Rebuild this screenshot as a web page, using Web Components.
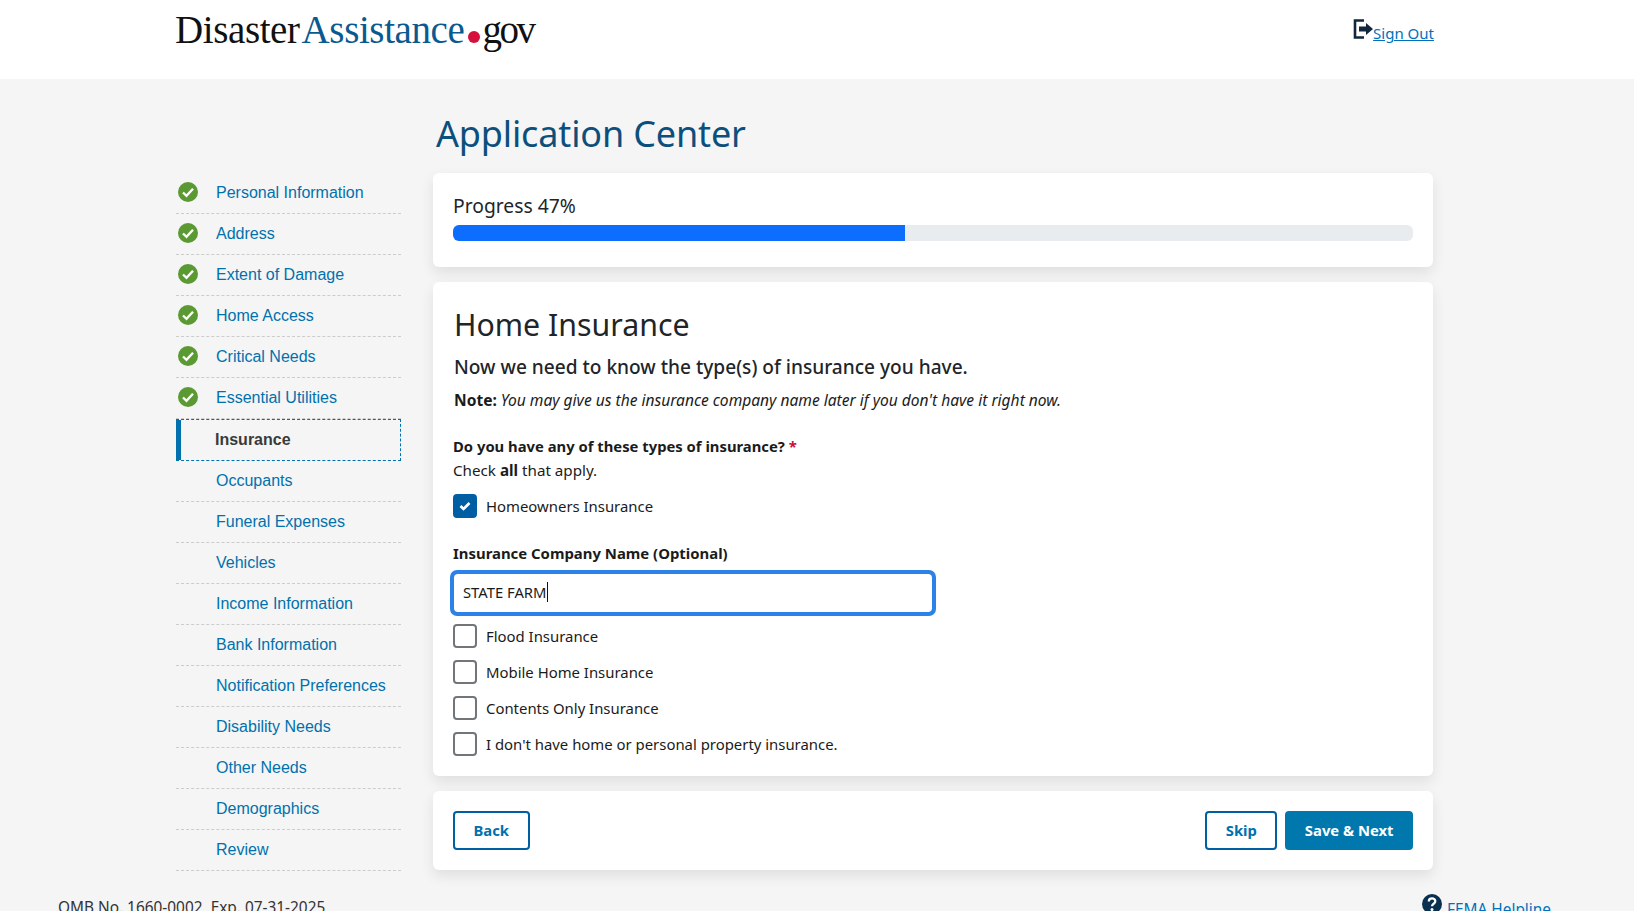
<!DOCTYPE html>
<html lang="en">
<head>
<meta charset="utf-8">
<title>Application Center</title>
<style>
    html, body {
        margin: 0;
        height: 100%;
        overflow: hidden;
        background: #f5f5f5;
    }
</style>
</head>
<body>
<app-header></app-header>
<application-page></application-page>
<script>
const SANS = `"Noto Sans", "Open Sans", sans-serif`;

class AppHeader extends HTMLElement {
    constructor() {
        super();
        this.attachShadow({ mode: 'open' });
    }

    connectedCallback() {
        this.shadowRoot.innerHTML = /*html*/ `
            <style>
                :host {
                    display: flex;
                    justify-content: space-between;
                    height: 79px;
                    padding: 0 200px 0 175px;
                    background: #fff;
                    box-sizing: border-box;
                }

                .logo {
                    display: flex;
                    align-items: baseline;
                    height: 42px;
                    margin-top: 9px;
                    font: 39px/42px "Liberation Serif", serif;
                    letter-spacing: -.4px;
                    color: #111;
                }

                .logo .blue {
                    color: #0b5a8f;
                    margin-left: 2px;
                }

                .logo .dot {
                    align-self: flex-end;
                    width: 12px;
                    height: 12px;
                    margin: 0 2px 8px 4px;
                    border-radius: 50%;
                    background: #d5103a;
                }

                .logo .gov {
                    letter-spacing: -2.500px;
                }

                .sign-out {
                    display: flex;
                    align-items: flex-start;
                    margin-top: 18px;
                    font: 15px/28px ${SANS};
                }

                .sign-out svg {
                    display: block;
                    margin-top: 1px;
                }

                .sign-out a {
                    color: #0071bc;
                    margin-top: 1px;
                }
            </style>
            <div class="logo"><span>Disaster</span><span class="blue">Assistance</span><span class="dot"></span><span class="gov">gov</span></div>
            <div class="sign-out">
                <svg width="20" height="20" viewBox="0 0 20 20">
                    <path d="M11 1.500H2v17h9" fill="none" stroke="#10273d" stroke-width="2.600"/>
                    <path d="M6 7.500h7V4l7 6-7 6v-3.500H6z" fill="#10273d"/>
                </svg>
                <a href="#">Sign Out</a>
            </div>
        `;
    }
}

class NavItem extends HTMLElement {
    constructor() {
        super();
        this.attachShadow({ mode: 'open' });
    }

    connectedCallback() {
        const done = this.hasAttribute('done');
        this.shadowRoot.innerHTML = /*html*/ `
            <style>
                :host {
                    display: flex;
                    align-items: center;
                    height: 41px;
                    box-sizing: border-box;
                    padding-left: 40px;
                    position: relative;
                    border-bottom: 1px dashed #ccc;
                    font: 16px "Liberation Sans", Arial, sans-serif;
                    color: #0071ad;
                }

                :host([current]) {
                    height: 42px;
                    padding-left: 34px;
                    border: 1px dashed #0071ad;
                    border-left: 5px solid #0071ad;
                    font-weight: 700;
                    color: #3a3a3a;
                }

                svg {
                    position: absolute;
                    left: 2px;
                    top: 9px;
                }
            </style>
            ${done ? `<svg width="20" height="20" viewBox="0 0 20 20">
                <circle cx="10" cy="10" r="10" fill="#5b9a32"/>
                <path d="M5 10.500l3.500 3.300L15 6.800" fill="none" stroke="#fff" stroke-width="2.400"/>
            </svg>` : ''}
            <slot></slot>
        `;
    }
}

class AppSidebar extends HTMLElement {
    constructor() {
        super();
        this.attachShadow({ mode: 'open' });
    }

    connectedCallback() {
        const done = ['Personal Information', 'Address', 'Extent of Damage', 'Home Access', 'Critical Needs', 'Essential Utilities'];
        const todo = ['Occupants', 'Funeral Expenses', 'Vehicles', 'Income Information', 'Bank Information',
            'Notification Preferences', 'Disability Needs', 'Other Needs', 'Demographics', 'Review'];
        this.shadowRoot.innerHTML = /*html*/ `
            <style>
                :host {
                    display: block;
                    width: 225px;
                    padding-top: 94px;
                }
            </style>
            ${done.map(t => `<nav-item done>${t}</nav-item>`).join('')}
            <nav-item current>Insurance</nav-item>
            ${todo.map(t => `<nav-item>${t}</nav-item>`).join('')}
        `;
    }
}

class AppCard extends HTMLElement {
    constructor() {
        super();
        this.attachShadow({ mode: 'open' });
    }

    connectedCallback() {
        this.shadowRoot.innerHTML = /*html*/ `
            <style>
                :host {
                    display: block;
                    padding: 20px;
                    margin-bottom: 15px;
                    background: #fff;
                    border-radius: 6px;
                    box-shadow: 0 6px 14px rgba(0, 0, 0, .09);
                    box-sizing: border-box;
                }
            </style>
            <slot></slot>
        `;
    }
}

class ProgressBar extends HTMLElement {
    constructor() {
        super();
        this.attachShadow({ mode: 'open' });
    }

    connectedCallback() {
        const value = this.getAttribute('value');
        this.shadowRoot.innerHTML = /*html*/ `
            <style>
                :host {
                    display: block;
                    height: 54px;
                    color: #212529;
                }

                .label {
                    font: 19.300px/26px ${SANS};
                    height: 32px;
                }

                .track {
                    height: 16px;
                    border-radius: 6px;
                    background: #e9ecef;
                    overflow: hidden;
                }

                .fill {
                    height: 100%;
                    width: calc(${value}% + 1px);
                    background: #0d6efd;
                }
            </style>
            <div class="label">Progress ${value}%</div>
            <div class="track"><div class="fill"></div></div>
        `;
    }
}

class CheckOption extends HTMLElement {
    constructor() {
        super();
        this.attachShadow({ mode: 'open' });
    }

    connectedCallback() {
        const checked = this.hasAttribute('checked');
        this.shadowRoot.innerHTML = /*html*/ `
            <style>
                :host {
                    display: flex;
                    align-items: center;
                    gap: 9px;
                    height: 24px;
                    margin-bottom: 12px;
                    font: 14.900px/24px ${SANS};
                    color: #1b1b1b;
                }

                .box {
                    width: 24px;
                    height: 24px;
                    box-sizing: border-box;
                    border: 2px solid #71767a;
                    border-radius: 4px;
                    background: #fff;
                }

                .box.on {
                    border-color: #005ea2;
                    background: #005ea2;
                }

                svg {
                    display: block;
                }
            </style>
            <div class="box ${checked ? 'on' : ''}">
                ${checked ? `<svg width="20" height="20" viewBox="0 0 20 20">
                    <path d="M5.500 10l3 3 6-6" fill="none" stroke="#fff" stroke-width="2.600"/>
                </svg>` : ''}
            </div>
            <slot></slot>
        `;
    }
}

class TextField extends HTMLElement {
    constructor() {
        super();
        this.attachShadow({ mode: 'open' });
    }

    connectedCallback() {
        this.shadowRoot.innerHTML = /*html*/ `
            <style>
                :host {
                    display: block;
                }

                label {
                    display: block;
                    font: 700 14.900px/22px ${SANS};
                    color: #1b1b1b;
                    margin-bottom: 9px;
                }

                .input {
                    display: flex;
                    align-items: center;
                    width: 480px;
                    height: 40px;
                    padding: 0 9px 2px;
                    box-sizing: border-box;
                    border: 1px solid #5c6269;
                    border-radius: 4px;
                    outline: 4px solid #2b82e8;
                    outline-offset: -1px;
                    font: 14.800px/24px ${SANS};
                    color: #1b1b1b;
                }

                .caret {
                    width: 1px;
                    height: 20px;
                    background: #111;
                }
            </style>
            <label><slot name="label"></slot></label>
            <div class="input"><slot></slot><span class="caret"></span></div>
        `;
    }
}

class AppButton extends HTMLElement {
    constructor() {
        super();
        this.attachShadow({ mode: 'open' });
    }

    connectedCallback() {
        this.shadowRoot.innerHTML = /*html*/ `
            <style>
                :host {
                    display: flex;
                    align-items: center;
                    justify-content: center;
                    height: 39px;
                    padding: 0 18.500px 2px;
                    box-sizing: border-box;
                    border: 2px solid #005ea2;
                    border-radius: 4px;
                    font: 700 14.800px/20px ${SANS};
                    color: #0071ad;
                    background: #fff;
                }

                :host([primary]) {
                    padding: 0 17.500px 2px;
                    border-color: #0078ae;
                    background: #0078ae;
                    color: #fff;
                }
            </style>
            <slot></slot>
        `;
    }
}

class ApplicationPage extends HTMLElement {
    constructor() {
        super();
        this.attachShadow({ mode: 'open' });
    }

    connectedCallback() {
        this.shadowRoot.innerHTML = /*html*/ `
            <style>
                :host {
                    display: block;
                }

                .layout {
                    display: grid;
                    grid-template-columns: 225px 1000px;
                    column-gap: 32px;
                    padding-left: 176px;
                }

                h1 {
                    margin: 0;
                    height: 94px;
                    padding: 28px 0 0 3px;
                    box-sizing: border-box;
                    font: 400 36px/54px ${SANS};
                    letter-spacing: -.15px;
                    color: #0d4f7c;
                }

                h2 {
                    margin: 1px 0 0 1px;
                    font: 400 30.300px/44px ${SANS};
                    color: #212529;
                }

                .lead {
                    margin: 7px 0 0 1px;
                    font: 500 19.100px/26px ${SANS};
                    color: #212529;
                }

                .note {
                    margin: 9px 0 0 1px;
                    font: italic 15.570px/22px ${SANS};
                    color: #1b1b1b;
                }

                .note b {
                    font-style: normal;
                }

                .question {
                    margin: 24px 0 0;
                    font: 700 14.800px/23px ${SANS};
                    color: #1b1b1b;
                }

                .required {
                    color: #c5113a;
                }

                .hint {
                    margin: 0 0 12px;
                    font: 15.200px/24px ${SANS};
                    color: #1b1b1b;
                }

                text-field {
                    margin: 24px 0 11px;
                }

                check-option:last-child {
                    margin-bottom: 0;
                }

                .actions {
                    display: flex;
                    gap: 8px;
                }

                .actions .back {
                    margin-right: auto;
                }

                footer {
                    display: flex;
                    justify-content: space-between;
                    padding: 12px 83px 0 58px;
                    font: 15.400px/22px ${SANS};
                    color: #333;
                }

                .helpline {
                    display: flex;
                    gap: 5px;
                    margin-top: -3px;
                    color: #0071bc;
                }

                .helpline span {
                    margin-top: 5px;
                }
            </style>
            <div class="layout">
                <app-sidebar></app-sidebar>
                <main>
                    <h1>Application Center</h1>
                    <app-card><progress-bar value="47"></progress-bar></app-card>
                    <app-card>
                        <h2>Home Insurance</h2>
                        <p class="lead">Now we need to know the type(s) of insurance you have.</p>
                        <p class="note"><b>Note:</b> You may give us the insurance company name later if you don't have it right now.</p>
                        <p class="question">Do you have any of these types of insurance? <span class="required">*</span></p>
                        <p class="hint">Check <b>all</b> that apply.</p>
                        <check-option checked>Homeowners Insurance</check-option>
                        <text-field>
                            <span slot="label">Insurance Company Name (Optional)</span>
                            STATE FARM
                        </text-field>
                        <check-option>Flood Insurance</check-option>
                        <check-option>Mobile Home Insurance</check-option>
                        <check-option>Contents Only Insurance</check-option>
                        <check-option>I don't have home or personal property insurance.</check-option>
                    </app-card>
                    <app-card>
                        <div class="actions">
                            <app-button class="back">Back</app-button>
                            <app-button>Skip</app-button>
                            <app-button primary>Save &amp; Next</app-button>
                        </div>
                    </app-card>
                </main>
            </div>
            <footer>
                <div>OMB No. 1660-0002, Exp. 07-31-2025</div>
                <div class="helpline">
                    <svg width="20" height="20" viewBox="0 0 20 20">
                        <circle cx="10" cy="10" r="10" fill="#0a2f4f"/>
                        <path d="M6.800 7.500c0-4.200 6.500-4.200 6.500-.2 0 2.600-3.300 2.400-3.300 5" fill="none" stroke="#fff" stroke-width="2.300"/>
                        <circle cx="10" cy="15.500" r="1.500" fill="#fff"/>
                    </svg>
                    <span>FEMA Helpline</span>
                </div>
            </footer>
        `;
    }
}

customElements.define('app-header', AppHeader);
customElements.define('nav-item', NavItem);
customElements.define('app-sidebar', AppSidebar);
customElements.define('app-card', AppCard);
customElements.define('progress-bar', ProgressBar);
customElements.define('check-option', CheckOption);
customElements.define('text-field', TextField);
customElements.define('app-button', AppButton);
customElements.define('application-page', ApplicationPage);
</script>
</body>
</html>
